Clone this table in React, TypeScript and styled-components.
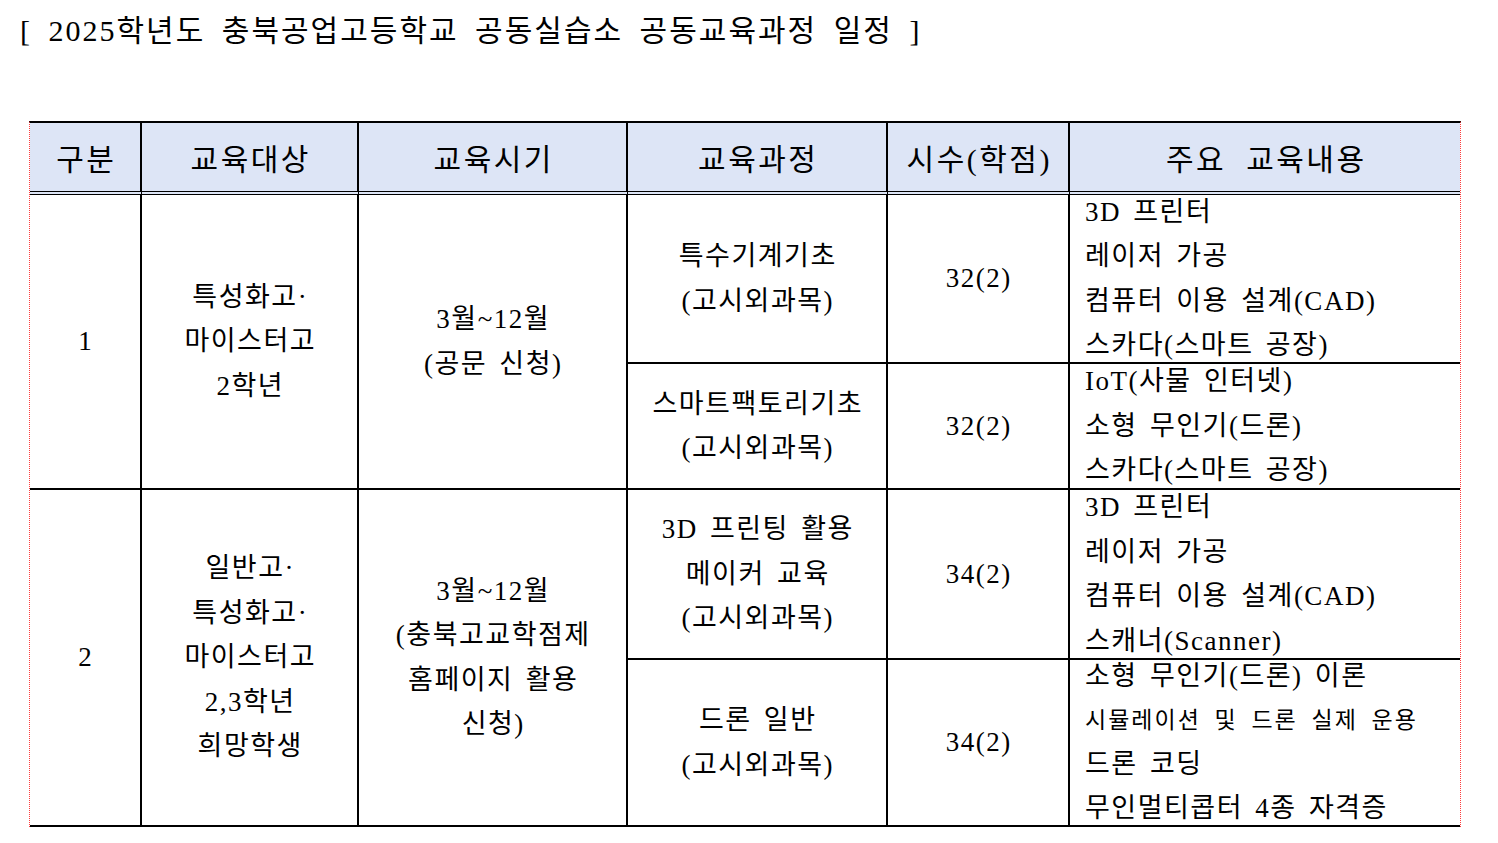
import styled, { createGlobalStyle } from "styled-components";

const GlobalStyle = createGlobalStyle`
  html, body {
    margin: 0;
    padding: 0;
    background: #fff;
  }
  body {
    font-family: "Liberation Serif", "Noto Sans CJK KR", serif;
    color: #000;
  }
`;

const Page = styled.div`
  display: flex;
  flex-direction: column;
  align-items: flex-start;
  width: 1498px;
  height: 843px;
  overflow: hidden;
`;

const Title = styled.h1`
  margin: 13px 0 0 20px;
  font-size: 30px;
  font-weight: 400;
  line-height: 36px;
  letter-spacing: 2px;
  word-spacing: 7px;
  white-space: pre;
`;

const Table = styled.div`
  margin: 72px 0 0 29px;
  display: grid;
  grid-template-columns: 112px 217px 269px 260px 182px 390px;
  grid-template-rows: 72px 169px 126px 170px 167px;
  border-top: 2px solid #000;
  border-left: 1px dotted #ff3b3b;
  border-right: 1px dotted #ff3b3b;
`;

const HeadCell = styled.div<{ $last?: boolean }>`
  box-sizing: border-box;
  display: flex;
  align-items: center;
  justify-content: center;
  padding-left: 2.5px;
  background: #dde5f6;
  border-right: ${(p) => (p.$last ? "none" : "2px solid #000")};
  border-bottom: 4px double #000;
  font-size: 30px;
  letter-spacing: 2.5px;
  word-spacing: 10px;
  white-space: pre;
`;

const Cell = styled.div<{ $span?: number; $left?: boolean; $last?: boolean }>`
  box-sizing: border-box;
  grid-row: span ${(p) => p.$span ?? 1};
  display: flex;
  flex-direction: column;
  justify-content: center;
  align-items: ${(p) => (p.$left ? "flex-start" : "center")};
  padding-left: ${(p) => (p.$left ? "15px" : "1.5px")};
  border-right: ${(p) => (p.$last ? "none" : "2px solid #000")};
  border-bottom: 2px solid #000;
  font-size: 27px;
  letter-spacing: 1.5px;
  word-spacing: 4px;
  text-align: center;
  white-space: pre;
  min-height: 0;
`;

const Line = styled.div<{ $small?: boolean }>`
  flex-shrink: 0;
  height: ${(p) => (p.$small ? "43px" : "44.5px")};
  line-height: ${(p) => (p.$small ? "43px" : "44.5px")};
  font-size: ${(p) => (p.$small ? "23px" : "27px")};
  letter-spacing: ${(p) => (p.$small ? "2px" : "1.5px")};
  word-spacing: ${(p) => (p.$small ? "6px" : "4px")};
`;

type Topic = string | { small: string };

interface Course {
  name: string[];
  hours: string;
  topics: Topic[];
}

interface Group {
  no: string;
  target: string[];
  period: string[];
  courses: Course[];
}

const headers = ["구분", "교육대상", "교육시기", "교육과정", "시수(학점)", "주요 교육내용"];

const groups: Group[] = [
  {
    no: "1",
    target: ["특성화고·", "마이스터고", "2학년"],
    period: ["3월~12월", "(공문 신청)"],
    courses: [
      {
        name: ["특수기계기초", "(고시외과목)"],
        hours: "32(2)",
        topics: ["3D 프린터", "레이저 가공", "컴퓨터 이용 설계(CAD)", "스카다(스마트 공장)"],
      },
      {
        name: ["스마트팩토리기초", "(고시외과목)"],
        hours: "32(2)",
        topics: ["IoT(사물 인터넷)", "소형 무인기(드론)", "스카다(스마트 공장)"],
      },
    ],
  },
  {
    no: "2",
    target: ["일반고·", "특성화고·", "마이스터고", "2,3학년", "희망학생"],
    period: ["3월~12월", "(충북고교학점제", "홈페이지 활용", "신청)"],
    courses: [
      {
        name: ["3D 프린팅 활용", "메이커 교육", "(고시외과목)"],
        hours: "34(2)",
        topics: ["3D 프린터", "레이저 가공", "컴퓨터 이용 설계(CAD)", "스캐너(Scanner)"],
      },
      {
        name: ["드론 일반", "(고시외과목)"],
        hours: "34(2)",
        topics: [
          "소형 무인기(드론) 이론",
          { small: "시뮬레이션 및 드론 실제 운용" },
          "드론 코딩",
          "무인멀티콥터 4종 자격증",
        ],
      },
    ],
  },
];

const Lines = ({ items }: { items: Topic[] }) => (
  <>
    {items.map((t, i) =>
      typeof t === "string" ? (
        <Line key={i}>{t}</Line>
      ) : (
        <Line key={i} $small>
          {t.small}
        </Line>
      )
    )}
  </>
);

const App = () => {
  return (
    <Page>
      <GlobalStyle />
      <Title>{"[ 2025학년도 충북공업고등학교 공동실습소 공동교육과정 일정 ]"}</Title>
      <Table>
        {headers.map((h, i) => (
          <HeadCell key={h} $last={i === headers.length - 1}>
            {h}
          </HeadCell>
        ))}
        {groups.map((g) => {
          const span = g.courses.length;
          return [
            <Cell key={g.no + "no"} $span={span}>
              <Line>{g.no}</Line>
            </Cell>,
            <Cell key={g.no + "target"} $span={span}>
              <Lines items={g.target} />
            </Cell>,
            <Cell key={g.no + "period"} $span={span}>
              <Lines items={g.period} />
            </Cell>,
            ...g.courses.map((c, ci) => [
              <Cell key={g.no + ci + "name"}>
                <Lines items={c.name} />
              </Cell>,
              <Cell key={g.no + ci + "hours"}>
                <Line>{c.hours}</Line>
              </Cell>,
              <Cell key={g.no + ci + "topics"} $left $last>
                <Lines items={c.topics} />
              </Cell>,
            ]),
          ];
        })}
      </Table>
    </Page>
  );
};

export default App;
